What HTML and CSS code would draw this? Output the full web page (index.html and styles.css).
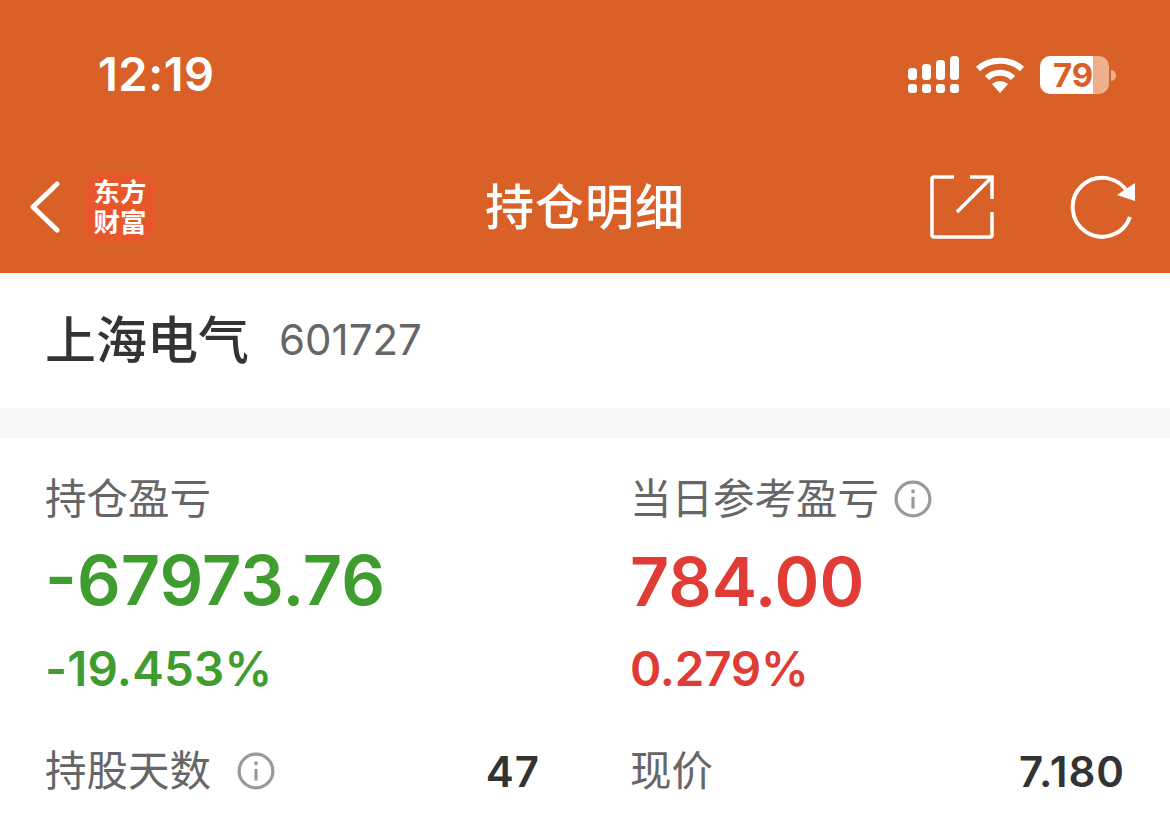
FILE: index.html
```html
<!DOCTYPE html>
<html lang="zh-CN">
<head>
  <meta charset="UTF-8" />
  <title>持仓明细</title>
  <link rel="stylesheet" href="styles.css">
</head>
<body>
  <div class="app">
    <header class="top">
      <div class="status">
        <span class="time">12:19</span>
        <div class="status-icons">
          <svg class="signal" width="52" height="38" viewBox="0 0 52 38" fill="#fff">
            <rect x="0" y="12" width="9" height="12" rx="3.5"/>
            <rect x="14" y="8" width="9" height="16" rx="3.5"/>
            <rect x="28" y="4" width="9" height="20" rx="3.5"/>
            <rect x="42" y="0" width="9" height="24" rx="3.5"/>
            <rect x="0" y="28" width="9" height="9" rx="3"/>
            <rect x="14" y="28" width="9" height="9" rx="3"/>
            <rect x="28" y="28" width="9" height="9" rx="3"/>
            <rect x="42" y="28" width="9" height="9" rx="3"/>
          </svg>
          <svg class="wifi" width="50" height="38" viewBox="0 0 50 38" fill="none" stroke="#fff" stroke-width="6">
            <path d="M3 13 C15 2 35 2 47 13"/>
            <path d="M12 22 C19 15 31 15 38 22"/>
            <path d="M17 28 L25 37 L33 28 C28 24 22 24 17 28Z" fill="#fff" stroke="none"/>
          </svg>
          <div class="battery">
            <div class="battery-body"><span>79</span></div>
            <div class="battery-tip"></div>
          </div>
        </div>
      </div>
      <nav class="nav">
        <div class="nav-left">
          <svg width="32" height="52" viewBox="0 0 32 52" fill="none" stroke="#fff" stroke-width="5" stroke-linecap="round" stroke-linejoin="round">
            <path d="M28 3 L4 26 L28 49"/>
          </svg>
          <div class="logo"><span>东方</span><span>财富</span></div>
        </div>
        <h1 class="nav-title">持仓明细</h1>
        <div class="nav-right">
          <svg width="64" height="64" viewBox="0 0 64 64" fill="none" stroke="#fff" stroke-width="3.5">
            <path d="M24 2 H4 Q2 2 2 4 V60 Q2 62 4 62 H60 Q62 62 62 60 V37"/>
            <path d="M27 37 L61 3"/>
            <path d="M40 2 H62 V24"/>
          </svg>
          <svg width="66" height="66" viewBox="0 0 66 66" fill="none" stroke="#fff" stroke-width="4">
            <path d="M58 19 A29.500 29.500 0 1 0 60 43"/>
            <path d="M65 9 V27 L47 21Z" fill="#fff" stroke="none"/>
          </svg>
        </div>
      </nav>
    </header>

    <section class="stock">
      <span class="stock-name">上海电气</span>
      <span class="stock-code">601727</span>
    </section>

    <div class="divider"></div>

    <section class="detail">
      <div class="col">
        <div class="label">持仓盈亏</div>
        <div class="value green">-67973.76</div>
        <div class="pct green">-19.453%</div>
        <div class="row">
          <span class="label with-icon wide">持股天数
            <svg class="info" width="38" height="38" viewBox="0 0 36 36" fill="none" stroke="#999" stroke-width="3"><circle cx="18" cy="18" r="16"/><path d="M18 16 V27"/><path d="M18 9 V12.500"/></svg>
          </span>
          <span class="num">47</span>
        </div>
      </div>
      <div class="col">
        <div class="label with-icon">当日参考盈亏
          <svg class="info" width="38" height="38" viewBox="0 0 36 36" fill="none" stroke="#999" stroke-width="3"><circle cx="18" cy="18" r="16"/><path d="M18 16 V27"/><path d="M18 9 V12.500"/></svg>
        </div>
        <div class="value red">784.00</div>
        <div class="pct red">0.279%</div>
        <div class="row">
          <span class="label">现价</span>
          <span class="num">7.180</span>
        </div>
      </div>
    </section>
  </div>
</body>
</html>
```

FILE: styles.css
```css
* {
  box-sizing: border-box;
}

html, body {
  height: 826px;
  overflow: hidden;
}

body {
  margin: 0;
  background: #fff;
  font-family: "Inter", "Noto Sans CJK SC", sans-serif;
  color: #333;
}

.top {
  background: #d96027;
  height: 273px;
  color: #fff;
}

.status {
  height: 146px;
  padding: 46px 54px 0 98px;
  display: flex;
  justify-content: space-between;
  align-items: flex-start;
}

.time {
  font-size: 47px;
  font-weight: 600;
  line-height: 56px;
  letter-spacing: 0.5px;
}

.status-icons {
  display: flex;
  align-items: flex-start;
  gap: 15px;
  padding-top: 10px;
}

.battery {
  display: flex;
  align-items: center;
}

.battery-body {
  width: 69px;
  height: 38px;
  border-radius: 10px;
  background: linear-gradient(to right, #fff 77%, #eeaf8d 77%);
  color: #d96027;
  font-size: 33px;
  font-weight: 700;
  line-height: 38px;
  padding-left: 13px;
}

.battery-tip {
  width: 5px;
  height: 11px;
  margin-left: 2px;
  border-radius: 0 5px 5px 0;
  background: #eeaf8d;
}

.nav {
  height: 127px;
  padding: 0 34px 6px 29px;
  position: relative;
  display: flex;
  justify-content: space-between;
  align-items: center;
}

.nav-left {
  display: flex;
  align-items: center;
  gap: 24px;
}

.logo {
  width: 70px;
  height: 68px;
  border-radius: 16px;
  background: #e8562b;
  display: flex;
  flex-direction: column;
  align-items: center;
  justify-content: center;
  font-size: 26.5px;
  font-weight: 700;
  line-height: 30px;
}

.nav-title {
  position: absolute;
  left: 0;
  right: 0;
  margin: 0;
  padding-bottom: 6px;
  text-align: center;
  font-size: 49px;
  font-weight: 500;
  letter-spacing: 1px;
}

.nav-right {
  display: flex;
  align-items: center;
  gap: 76px;
}

.stock {
  height: 133px;
  padding: 0 45px;
  display: flex;
  align-items: center;
  gap: 30px;
  margin-bottom: 2px;
}

.stock-name {
  font-size: 51px;
  font-weight: 500;
  color: #333;
  margin-bottom: 6px;
}

.stock-code {
  font-size: 42px;
  color: #666;
}

.divider {
  height: 30px;
  background: #f6f7f9;
}

.detail {
  display: grid;
  grid-template-columns: 585px 1fr;
  padding: 35px 45px 0;
}

.col:first-child {
  padding-right: 90px;
}

.label {
  font-size: 41.5px;
  line-height: 52px;
  color: #666;
}

.with-icon {
  display: flex;
  align-items: center;
  gap: 15px;
}

.wide {
  gap: 26px;
}

.value {
  font-size: 68px;
  font-weight: 600;
  line-height: 84px;
  margin-top: 14px;
}

.value.green {
  font-size: 68.5px;
}

.pct {
  font-size: 47.5px;
  font-weight: 600;
  line-height: 56px;
  margin-top: 18px;
  letter-spacing: -0.2px;
}

.pct.green {
  letter-spacing: 0.2px;
}

.green {
  color: #3f9c2f;
}

.red {
  color: #e03c35;
}

.row {
  display: flex;
  justify-content: space-between;
  align-items: center;
  margin-top: 48px;
}

.num {
  font-size: 42px;
  font-weight: 600;
  color: #333;
  letter-spacing: 1px;
}
```
